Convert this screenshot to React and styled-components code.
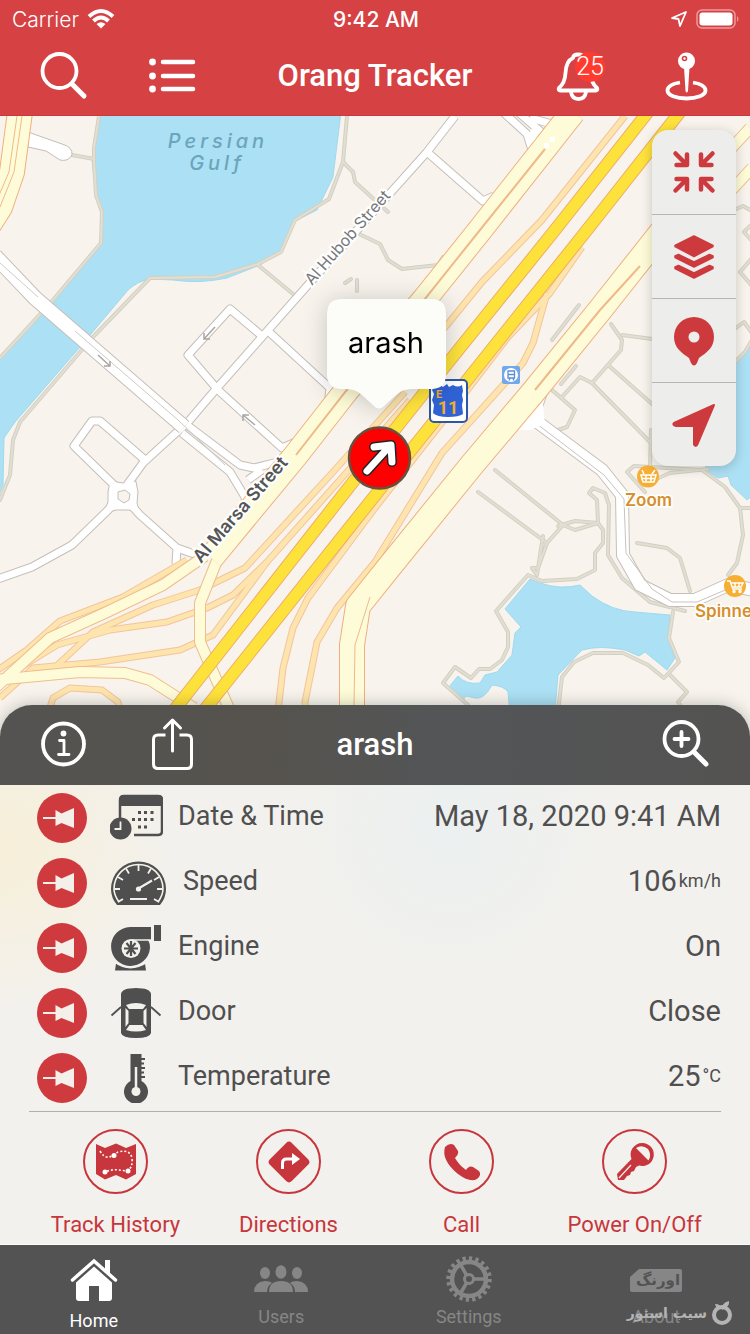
import React, { useState } from "react";
import styled, { createGlobalStyle } from "styled-components";

const paths = [
  "M99 116 L94 148 L94 162 L96 195 L102 212 L101 243 L53 300 L0 358",
  "M347 116 L343 162 L329 199 L295 220 L281 252 L258 264 L215 277 L150 278 L92 338 L20 422 L13 440 L10 475 L0 500",
  "M72 155 L94 159",
  "M343 162 L353 172 L355 182 L388 212",
  "M357 233 L380 244 L388 260 L402 269 L438 265 L443 257",
  "M258 265 L293 294",
  "M345 283 L351 279",
  "M357 280 L357 291",
  "M552 340 L579 305",
  "M561 384 L576 366",
  "M611 324 L622 340 L621 350 L592 383 L580 377 L562 397",
  "M622 335 L660 340",
  "M608 365 L660 411",
  "M592 383 L650 442",
  "M552 390 L575 410 L567 427 L558 430",
  "M651 430 L650 468",
  "M495 470 L563 525 L547 543 L478 492",
  "M543 536 L537 575 L532 568 L538 568 L547 543",
  "M558 526 L575 521 L598 523 L575 530 L563 525",
  "M598 523 L597 500 L589 493 L593 488 L605 493 L609 505 L608 555 L622 578 L650 602 L685 611",
  "M598 523 L603 530 L603 543 L595 553 L595 570 L577 579 L542 581 L528 575 L496 611 L508 632 L508 647 L502 660 L490 669 L479 669 L471 678 L455 667 L443 683 L468 705",
  "M637 543 L667 548 L680 558 L690 591",
  "M645 492 L627 472 L634 466 L702 470 L725 487 L740 508 L743 535 L737 563 L728 575",
  "M740 508 L752 508",
  "M645 484 L670 473 L708 469",
  "M673 612 L669 638 L679 662 L664 678 L648 665 L623 653 L593 653 L574 662 L562 677 L557 720",
  "M670 675 L687 692 L678 702 L690 720",
  "M733 364 L745 352 L752 340",
  "M736 328 L744 322 L752 333",
  "M752 258 L740 272 L752 286",
  "M734 210 L743 206 L752 211",
  "M752 224 L744 232 L752 241",
];

const streets = [
  "M455 116 L427 152 L307 286 L217 388 L188 422 L143 463 L127 485",
  "M427 152 L483 201 L494 196",
  "M503 112 L527 134 L532 150",
  "M518 112 L548 138",
  "M530 118 L552 124",
  "M262 336 L230 309 L188 355 L218 390 L282 448 L296 442",
  "M268 331 L330 388 L328 405",
  "M145 460 L100 421 L92 421 L74 446 L114 485",
  "M110 508 L103 515 L72 545 L32 567 L-5 580",
  "M132 506 L140 515 L177 548 L176 564",
  "M177 548 L200 556",
  "M187 425 L240 465 L254 468 L278 462",
  "M182 433 L230 472 L245 497 L247 525",
  "M248 480 L262 470",
];

const ramps = [
  "M625 116 L542 220 L482 282 L447 325 L380 398",
  "M582 247 L550 293 L508 337 L465 393 L375 508 L308 598 L293 628 L283 668 L277 720",
  "M547 293 L533 343 L523 363 L442 453 L375 562 L337 608 L317 642 L305 702 L305 720",
  "M405 392 L333 472 L245 568 L200 590 L153 605 L93 632 L50 672",
  "M410 400 L347 472 L267 562 L233 595 L207 608 L167 622 L110 630 L57 645 L0 680",
  "M267 562 L213 635 L180 650 L100 662 L33 668 L0 698",
  "M187 560 L123 597 L60 621 L27 650 L-5 672",
  "M46 720 L53 698 L70 688 L102 690 L118 702 L122 720",
];

const highways = [
  "M218 558 L200 603 L200 642 L213 672 L234 720",
  "M205 556 L163 585 L107 612 L50 638 L-5 688",
  "M-5 680 L80 672 L125 673 L150 680 L194 708",
  "M750 128 L728 152 L728 180",
  "M752 168 L728 194",
];

const wideHighways = [
  "M20 112 L12 172 L0 207 L-12 226",
  "M573 112 L480 230 L424 300 L346 391 L296 455 L211 558",
  "M668 224 L600 310 L535 390 L471 466 L390 566 L358 606 L352 645 L352 720",
];

const motorways = [
  "M648 112 L555 230 L447 364 L353 482 L168 718",
  "M680 112 L587 230 L373 498 L198 718",
];

const roundabout =
  "M111 482 L123 484 L135 482 L137 492 L136 503 L138 511 L129 509 L116 509 L105 512 L109 502 L109 492 Z";

const Road = ({ lines, casing, fill, width }) => (
  <g fill="none" strokeLinejoin="round">
    {lines.map((d) => (
      <path key={d} d={d} stroke={casing} strokeWidth={width + 2} />
    ))}
    {lines.map((d) => (
      <path key={d} d={d} stroke={fill} strokeWidth={width} />
    ))}
  </g>
);

const MapDrawing = () => (
  <Canvas viewBox="0 116 750 619" preserveAspectRatio="xMidYMin slice">
    <rect y="116" width="750" height="619" fill="#f8f4ed" />
    <g fill="#ace0f4" stroke="#a0d9ef" strokeWidth="1">
      <path d="M100 112 L94 140 L92 160 L96 197 L102 213 L101 243 L53 300 L-2 358 V497 L3 485 L4 438 L15 422 L80 347 L128 290 Q138 281 150 279 L173 280 Q200 284 227 278 L260 265 L281 251 L295 221 L317 210 L333 177 L341 112 Z" />
      <path d="M530 579 L540 583 Q560 590 580 585 L592 596 Q612 611 635 612 L670 615 L668 638 L675 658 L667 670 L645 652 L639 656 L625 650 Q600 645 582 650 L558 675 L553 735 H512 L508 692 Q504 686 492 685 Q484 700 475 698 L466 696 L463 700 L449 687 L458 676 Q466 685 480 683 L485 675 L497 672 L512 655 L515 633 L521 627 L505 609 Z" />
      <path d="M752 345 L737 360 L700 390 L706 470 L718 478 L728 476 L731 485 L747 500 L752 496 Z" />
    </g>

    <g fill="none" strokeLinecap="round" strokeLinejoin="round">
      {paths.map((d) => (
        <path key={d} d={d} stroke="#d2d0c4" strokeWidth="4" />
      ))}
      {paths.map((d) => (
        <path key={d} d={d} stroke="#e2dfd2" strokeWidth="2" />
      ))}
    </g>

    <path
      d="M28 132 L62 144 Q73 147 72 155 Q68 162 60 160 L46 151 L28 147 Z"
      fill="#fff"
      stroke="#c4beb8"
    />
    <path d={roundabout} stroke="#c4beb8" strokeWidth="3" />
    <Road lines={streets} casing="#c5bfba" fill="#fff" width={7} />
    <path d={roundabout} fill="#fff" stroke="#fff" />
    <path d="M118 492 l7 -2 5 4 -1 6 -5 3 -6 -4z" fill="#f8f4ed" stroke="#c4beb8" />
    <Road
      lines={["M-5 256 L35 298 L95 350 L184 427"]}
      casing="#c5bfba"
      fill="#fff"
      width={14}
    />
    <path d="M0 263 L38 297 M75 331 L178 420 L225 465" fill="none" stroke="#cfcac6" />

    <Road
      lines={[
        "M541 392 L532 418 L602 470 L622 495 L623 555 L640 585 L670 600 L695 600 L728 585 L755 590",
      ]}
      casing="#c5bfba"
      fill="#fff"
      width={12}
    />
    <path
      d="M533 421 L604 475 L624 499 L626 553 L652 589 L672 602 L697 602 L730 588"
      fill="none"
      stroke="#c9c3be"
    />
    <path d="M525 413 L542 394 L545 424 L530 430 L515 430 Z" fill="#fff" />

    <Road lines={ramps} casing="#f4c39c" fill="#fde5ad" width={5} />
    <Road lines={highways} casing="#f0bd8c" fill="#fefcd8" width={10} />
    <Road lines={wideHighways} casing="#efb07c" fill="#fefcd8" width={24} />
    <g fill="none" stroke="#efb98a">
      <path d="M22 116 L14 172 L0 207 M17 116 L9 172 L-3 200" />
      <path d="M545 149 L480 230 L424 300 L346 391 L296 455" strokeWidth="2" />
      <path d="M640 266 L600 310 L535 390" strokeWidth="2" />
      <path d="M370 597 L355 645 L354 705" />
    </g>
    <g fill="#fff">
      <path d="M526 140 l6 -12 8 4 -7 10z M544 143 h5 v5 h-5z M550 137 h5 v5 h-5z" />
    </g>
    <Road lines={motorways} casing="#efab68" fill="#fee23c" width={11} />

    <g fill="none" stroke="#a9a6a4" strokeWidth="1.5">
      <path d="M98 355 L110 366 M104 366 h6 v-5" />
      <path d="M215 327 L204 339 M204 333 v6 h6" />
      <path d="M255 425 L243 415 M243 421 v-6 h6" />
    </g>

    <WaterLabel x="218" y="148">Persian</WaterLabel>
    <WaterLabel x="217" y="170">Gulf</WaterLabel>
    <StreetLabel transform="translate(312 286) rotate(-48.5)">Al Hubob Street</StreetLabel>
    <StreetLabel $strong transform="translate(201 564) rotate(-49)">
      Al Marsa Street
    </StreetLabel>

    <rect x="502" y="366" width="18" height="18" rx="2" fill="#72a7ea" />
    <circle cx="511" cy="375" r="7" fill="#fff" />
    <path
      d="M508 371h6.500v7h-6.500z M508.500 374.500h5.500 M509 380.500l1-2 M514 380.500l-1-2"
      fill="none"
      stroke="#5a8fd8"
      strokeWidth="1.3"
    />

    <rect x="430" y="380" width="37" height="42" rx="4" fill="#fff" stroke="#2c56a8" strokeWidth="2" />
    <path
      d="M435 386 q3 -3 8 1 l4 -3 2 3 4 -2 q5 3 9 0 l1 6 -1 4 1 5 -1 5 1 9 q-4 3 -15 3 -11 0 -15 -4 l1 -8 -2 -5 2 -6 -2 -4z"
      fill="#2f63d6"
    />
    <ShieldText x="439" y="398" $size={11}>E</ShieldText>
    <ShieldText x="448" y="414" $size={18}>11</ShieldText>

    <circle cx="648" cy="476.500" r="11" fill="#f6ae33" />
    <g fill="none" stroke="#fff" strokeWidth="1.500">
      <path d="M641 475 h15 l-2 7 h-11z M641 478.500h13 M646 475v7 M651 475v7 M644 474l-2-4 M652 474l3-4" />
    </g>
    <PlaceLabel x="625" y="506">Zoom</PlaceLabel>
    <circle cx="735" cy="586" r="11" fill="#f6ae33" />
    <g fill="none" stroke="#fff" strokeWidth="1.500">
      <path d="M727 581h3l3 8h9 M731 583h12l-2 4h-9 M735 583v4 M739 583v4" />
      <circle cx="734" cy="591.500" r="1" />
      <circle cx="740" cy="591.500" r="1" />
    </g>
    <PlaceLabel x="695" y="617">Spinneys</PlaceLabel>

    <Callout>
      <path
        d="M342 299 H431 Q446 299 446 314 V374 Q446 389 431 389 H412 Q402 389 396 395 L384 406 Q379 411 374 406 L362 395 Q356 389 346 389 H342 Q327 389 327 374 V314 Q327 299 342 299 Z"
        fill="#fcfcf9"
      />
      <text x="386" y="353">arash</text>
    </Callout>

    <circle cx="379.500" cy="458" r="30.500" fill="#f00" stroke="#66513f" strokeWidth="2.500" />
    <g fill="none" strokeLinecap="round" strokeLinejoin="round">
      <path d="M367 471 L388 448 M374 447 L391 445 L392 462" stroke="#222" strokeWidth="10" />
      <path d="M367 471 L388 448 M374 447 L391 445 L392 462" stroke="#fff" strokeWidth="7" />
    </g>
  </Canvas>
);

const Glyph = ({ w = 48, h = 48, children }) => (
  <svg width={w} height={h} viewBox={`0 0 ${w} ${h}`} fill="none" aria-hidden="true">
    {children}
  </svg>
);

const line = { stroke: "currentColor", strokeLinecap: "round", strokeLinejoin: "round" };

const SearchIcon = ({ plus }) => (
  <Glyph>
    <circle cx="19.500" cy="19" r="17" {...line} strokeWidth="3.800" />
    <path d="M32 32 L44 44" {...line} strokeWidth="5" />
    {plus && <path d="M19.500 12 V26 M12.500 19 H26.500" {...line} strokeWidth="3.800" />}
  </Glyph>
);

const ListIcon = () => (
  <Glyph>
    {[10, 24, 37].map((y) => (
      <g key={y}>
        <circle cx="4.500" cy={y} r="3.400" fill="currentColor" />
        <path d={`M15 ${y} H45`} {...line} strokeWidth="4.500" />
      </g>
    ))}
  </Glyph>
);

const BellIcon = () => (
  <Glyph h={50}>
    <path
      d="M19 7 Q19 3.500 24 3.500 Q29 3.500 29 7 Q37 11 37 22 Q37 32 43 37 Q44 39.500 42 39.500 H6 Q4 39.500 5 37 Q11 32 11.500 22 Q12 10 19 7 Z"
      {...line}
      strokeWidth="3.800"
    />
    <path d="M17 41 Q18 48 24.500 48 Q31 48 32 41" {...line} strokeWidth="3.800" />
  </Glyph>
);

const PlaceIcon = () => (
  <Glyph h={50}>
    <path
      d="M18 31.500 C9 33 5.500 36 5.500 39.500 C5.500 44 14 47.500 24.500 47.500 C35 47.500 43.500 44 43.500 39.500 C43.500 36 40 33 31 31.500"
      stroke="currentColor"
      strokeWidth="3.800"
    />
    <path d="M22 16 H27.500 L26 40 Q24.700 43 23.500 40 Z" fill="currentColor" />
    <circle cx="24.500" cy="10" r="8.500" fill="currentColor" />
    <circle cx="22.500" cy="7.500" r="2" stroke="#d64244" strokeWidth="1.600" />
  </Glyph>
);

const InfoIcon = () => (
  <Glyph>
    <circle cx="23.500" cy="24" r="20.500" {...line} strokeWidth="3.800" />
    <circle cx="23.500" cy="13.500" r="2.900" fill="currentColor" />
    <path d="M19.500 20.500 H24 V34.500 M18.500 34.500 H29" {...line} strokeWidth="2.800" />
  </Glyph>
);

const ShareIcon = () => (
  <Glyph h={54}>
    <path
      d="M17.500 18 H10 Q5.500 18 5.500 22.500 V47 Q5.500 51.500 10 51.500 H39 Q43.500 51.500 43.500 47 V22.500 Q43.500 18 39 18 H31.500"
      stroke="currentColor"
      strokeWidth="3"
    />
    <path d="M24.500 34 V4 M16.500 11 L24.500 3 L32.500 11" {...line} strokeWidth="3" />
  </Glyph>
);

const ShrinkIcon = () => (
  <Glyph>
    {[0, 90, 180, 270].map((a) => (
      <g key={a} transform={`rotate(${a} 24 24)`}>
        <path d="M5.500 5.500 L16 16 M17 6.500 V17 H6.500" {...line} strokeWidth="4.500" />
      </g>
    ))}
  </Glyph>
);

const LayersIcon = () => (
  <Glyph>
    <g fill="currentColor" stroke="currentColor" strokeWidth="1.500" strokeLinejoin="round">
      <path d="M24 3 L43 12.500 V13.500 L24 23.500 L5 13.500 V12.500 Z" />
      <path d="M5 23 L8.500 21.500 L24 29 L39.500 21.500 L43 23 V24.500 L24 34 L5 24.500 Z" />
      <path d="M5 34 L8.500 32.500 L24 40 L39.500 32.500 L43 34 V35.500 L24 45 L5 35.500 Z" />
    </g>
  </Glyph>
);

const MarkerIcon = () => (
  <Glyph h={50}>
    <path
      fillRule="evenodd"
      d="M24 1 A20 20 0 0 1 44 21 C44 32 36 37 29 42 L27 47 Q24 52 21 47 L19 42 C12 37 4 32 4 21 A20 20 0 0 1 24 1 Z M24 15.500 A5.500 5.500 0 1 0 24 26.500 A5.500 5.500 0 1 0 24 15.500 Z"
      fill="currentColor"
    />
  </Glyph>
);

const NavigateIcon = () => (
  <Glyph>
    <path
      d="M44 4 L27 44 Q25.500 46 24 43.500 V25 H6 Q2 24 4 22 Z"
      fill="currentColor"
      stroke="currentColor"
      strokeWidth="2"
      strokeLinejoin="round"
    />
  </Glyph>
);

const TackIcon = () => (
  <Glyph w={50} h={50}>
    <path d="M6 25 H19" stroke="currentColor" strokeWidth="2" />
    <path
      d="M18.500 17 L24.500 20.500 L37 15 V35 L24.500 30 L18.500 33 Z"
      fill="currentColor"
    />
  </Glyph>
);

const DateIcon = () => (
  <Glyph w={53} h={48}>
    <path d="M10 24 V6 Q10 2 14 2 H48 Q52 2 52 6 V37 Q52 41 48 41 H24" stroke="currentColor" strokeWidth="2.500" />
    <path d="M9 12 V6 Q9 1 14 1 H48 Q53 1 53 6 V12 Z" fill="currentColor" />
    <path
      d="M28 17h3v3h-3z M34 17h3v3h-3z M40.500 17h3v3h-3z M22 24h3v3h-3z M28 24h3v3h-3z M34 24h3v3h-3z M40.500 24h3v3h-3z M28 31.500h3v3h-3z M34 31.500h3v3h-3z"
      fill="currentColor"
    />
    <circle cx="10.500" cy="34.500" r="11" fill="currentColor" />
    <path d="M10.500 27.500 V35 H4.500" stroke="#f3f1eb" strokeWidth="1.800" />
  </Glyph>
);

const SpeedIcon = () => (
  <Glyph w={58} h={48}>
    <path d="M7 46 Q1 39 1 30 A27.500 27.500 0 0 1 56 30 Q56 39 50 46 Z" fill="currentColor" />
    <path d="M9 43 Q4 36 4 30 A24.500 24.500 0 0 1 53 30 Q53 36 48 43" stroke="#f3f1eb" strokeWidth="1.600" />
    <path
      d="M4.500 30 H10 M8 18 L13 21 M16 9.500 L19 14.500 M28.500 6 V12 M41 9.500 L38 14.500 M49 18 L44 21 M52.500 30 H47 M8 43 L13 40 M49 43 L44 40"
      stroke="#f3f1eb"
      strokeWidth="1.800"
    />
    <path d="M28.500 29.500 L42 21.500 M20 40 H37" stroke="#f3f1eb" strokeWidth="2.200" />
    <circle cx="28.500" cy="30" r="2.600" fill="#f3f1eb" />
  </Glyph>
);

const EngineIcon = () => (
  <Glyph w={53} h={48}>
    <path
      d="M41 3 V16 H38 Q40 19 40 24 A19.500 19.500 0 1 1 20 3 Z M44 1 H51 V17 H44 Z M5 46.500 L6 39.500 Q20 48 35 39.500 L36 46.500 Z"
      fill="currentColor"
    />
    <path d="M5 38 Q20 49 37 38" stroke="#f3f1eb" strokeWidth="2" />
    <circle cx="21" cy="24.500" r="9.500" fill="#f3f1eb" />
    <path d="M21 17 V32 M14 24.500 H28 M16.500 19 L25.500 30 M25.500 19 L16.500 30" stroke="currentColor" strokeWidth="2.200" />
    <path d="M22 16 H41" stroke="#f3f1eb" strokeWidth="1.500" />
  </Glyph>
);

const DoorIcon = () => (
  <Glyph w={53} h={52}>
    <path
      d="M11 7 Q12 1 26 1 Q40 1 41 7 V46 Q40 51 26 51 Q12 51 11 46 Z"
      fill="currentColor"
    />
    <path d="M11 20 L1.500 28.500 M41 20 L50.500 28.500" stroke="currentColor" strokeWidth="1.800" />
    <path
      d="M16 18 Q26 14 36 18 L33 22 H19 Z M15.500 21 L18.500 24 V36 L15.500 40 Z M36.500 21 L33.500 24 V36 L36.500 40 Z M16 43 L19.500 38 H32.500 L36 43 Q26 46 16 43 Z"
      fill="#f3f1eb"
    />
  </Glyph>
);

const TemperatureIcon = () => (
  <Glyph w={53} h={50}>
    <path d="M20.500 1 H31.500 V28 A12 12 0 1 1 20.500 28 Z" fill="currentColor" />
    <path d="M31 6 H35 M31 10.500 H34 M31 15 H35 M31 19.500 H34 M31 24 H35" stroke="currentColor" strokeWidth="1.800" />
    <path d="M26 14 V38" stroke="#f3f1eb" strokeWidth="2.500" />
    <circle cx="26" cy="38.500" r="4.500" fill="#f3f1eb" />
  </Glyph>
);

const HistoryIcon = () => (
  <Glyph w={44} h={44}>
    <path d="M2 4 L11 8 L22 3.500 L32 8 L42 4 V34 L32 39.500 L22 35 L11 39.500 L2 34 Z" fill="currentColor" />
    <path
      d="M6 11 Q10 18 15 17 Q19 16 24 12 Q36 9 38 18 Q39 28 33 31 L25 30 Q18 29 11 32"
      stroke="#fff"
      strokeWidth="1.600"
      strokeDasharray="2 2"
    />
    <g fill="#fff">
      <circle cx="20" cy="15.500" r="2.500" />
      <circle cx="34" cy="31" r="2.500" />
      <circle cx="11" cy="32" r="2.500" />
    </g>
  </Glyph>
);

const DirectionsIcon = () => (
  <Glyph w={44} h={44}>
    <rect x="6.500" y="6.500" width="31" height="31" rx="4" transform="rotate(45 22 22)" fill="currentColor" />
    <path d="M15.500 29 V23 Q15.500 19 19.500 19 H27" stroke="#fff" strokeWidth="3" />
    <path d="M25 13 L33 19 L25 25 Z" fill="#fff" />
  </Glyph>
);

const CallIcon = () => (
  <Glyph w={44} h={44}>
    <path
      d="M5 7 Q10 2 14 5 L18 11 Q19 14 15 18 Q19 25 26 30 Q29 25 33 27 L39 31 Q42 35 37 39 Q30 43 18 34 Q1 20 5 7 Z"
      fill="currentColor"
    />
  </Glyph>
);

const KeyIcon = () => (
  <Glyph w={44} h={44}>
    <path
      fillRule="evenodd"
      d="M29 3 A11.500 11.500 0 1 1 26 25.500 L23 27 L21 31 L18 32 L17 35 L14 36 L11 40 H5 L4 34 L18.500 19 A11.500 11.500 0 0 1 29 3 Z M23 8 L35.500 20.500 Q39 15 35 9 Q29 4 23 8 Z"
      fill="currentColor"
    />
    <path d="M6 38 L18 25" stroke="#f3f1eb" strokeWidth="1.200" />
  </Glyph>
);

const HomeIcon = () => (
  <Glyph h={44}>
    <path d="M2.500 22 L24 3 L45.500 22" {...line} strokeWidth="3.500" strokeLinejoin="miter" />
    <path d="M35 2 H40 V18 L35 13 Z" fill="currentColor" />
    <path d="M24 8.500 L42 24.500 V40 Q42 43 39 43 H29 V28 H19 V43 H9 Q6 43 6 40 V24.500 Z" fill="currentColor" />
  </Glyph>
);

const UsersIcon = () => (
  <Glyph w={54} h={40}>
    <g fill="currentColor">
      <ellipse cx="11" cy="14" rx="5" ry="6" />
      <ellipse cx="43" cy="14" rx="5" ry="6" />
      <ellipse cx="27" cy="13" rx="5.500" ry="6.700" />
      <path d="M0 33 Q0 23 11 22 Q16 22 18 24 Q13 27 13 33 Z M54 33 Q54 23 43 22 Q38 22 36 24 Q41 27 41 33 Z" />
      <path d="M15 33 Q15 22 27 22 Q39 22 39 33 Z" />
    </g>
  </Glyph>
);

const SettingsIcon = () => (
  <Glyph w={48} h={46}>
    <circle cx="24" cy="23" r="17" stroke="currentColor" strokeWidth="4.500" />
    <circle cx="24" cy="23" r="20.500" stroke="currentColor" strokeWidth="4.500" pathLength="40" strokeDasharray="1 1" />
    <circle cx="24" cy="23" r="4.500" stroke="currentColor" strokeWidth="3" />
    <path d="M29 23 H40 M21.500 19 L16 9.500 M21.500 27 L16 36.500" stroke="currentColor" strokeWidth="3.500" />
  </Glyph>
);

const BrandIcon = () => (
  <Glyph w={54} h={40}>
    <path d="M10 10 H51 Q53 10 53 12 V31 Q53 33 51 33 H3 Q1 33 1 31 V18 Z" fill="currentColor" />
    <BrandText x="29" y="26">اورنگ</BrandText>
  </Glyph>
);

const rows = [
  { label: "Date & Time", value: "May 18, 2020 9:41 AM", icon: <DateIcon /> },
  { label: "Speed", value: "106", unit: "km/h", icon: <SpeedIcon /> },
  { label: "Engine", value: "On", icon: <EngineIcon /> },
  { label: "Door", value: "Close", icon: <DoorIcon /> },
  { label: "Temperature", value: "25", unit: "°C", icon: <TemperatureIcon /> },
];

const actions = [
  { label: "Track History", icon: <HistoryIcon /> },
  { label: "Directions", icon: <DirectionsIcon /> },
  { label: "Call", icon: <CallIcon /> },
  { label: "Power On/Off", icon: <KeyIcon /> },
];

const tabs = [
  { label: "Home", icon: <HomeIcon /> },
  { label: "Users", icon: <UsersIcon /> },
  { label: "Settings", icon: <SettingsIcon /> },
  { label: "About", icon: <BrandIcon /> },
];

const App = () => {
  const [tab, setTab] = useState("Home");

  return (
    <Page>
      <GlobalStyle />
      <Header>
        <StatusBar>
          <StatusSide>
            Carrier
            <Glyph w={28} h={22}>
              <g stroke="currentColor" strokeWidth="4">
                <path d="M2 8.500 Q14 -2.500 26 8.500" />
                <path d="M6.500 13 Q14 6 21.500 13" />
              </g>
              <path d="M9.500 16 Q14 12.500 18.500 16 L14 20.500 Z" fill="currentColor" />
            </Glyph>
          </StatusSide>
          <Clock>9:42 AM</Clock>
          <StatusSide $end>
            <Glyph w={18} h={18}>
              <path d="M16 2 L10 16 L8.500 9 L2 8 Z" {...line} strokeWidth="1.800" />
            </Glyph>
            <Glyph w={44} h={20}>
              <rect x="1" y="1" width="38" height="18" rx="5" stroke="#e99a9b" strokeWidth="1.500" />
              <rect x="3.500" y="3.500" width="33" height="13" rx="3" fill="currentColor" />
              <path d="M41 7 Q44 10 41 13 Z" fill="#e99a9b" />
            </Glyph>
          </StatusSide>
        </StatusBar>
        <Bar>
          <BarGroup>
            <IconButton aria-label="Search">
              <SearchIcon />
            </IconButton>
            <IconButton aria-label="Vehicle list">
              <ListIcon />
            </IconButton>
          </BarGroup>
          <Title>Orang Tracker</Title>
          <BarGroup $end>
            <IconButton aria-label="Notifications">
              <BellIcon />
              <Badge>25</Badge>
            </IconButton>
            <IconButton aria-label="Places">
              <PlaceIcon />
            </IconButton>
          </BarGroup>
        </Bar>
      </Header>

      <Map>
        <MapDrawing />
        <Controls>
          <ControlButton aria-label="Fit all">
            <ShrinkIcon />
          </ControlButton>
          <ControlButton aria-label="Layers">
            <LayersIcon />
          </ControlButton>
          <ControlButton aria-label="Marker">
            <MarkerIcon />
          </ControlButton>
          <ControlButton aria-label="My location">
            <NavigateIcon />
          </ControlButton>
        </Controls>
      </Map>

      <Sheet>
        <SheetHeader>
          <BarGroup>
            <IconButton aria-label="Info">
              <InfoIcon />
            </IconButton>
            <IconButton aria-label="Share">
              <ShareIcon />
            </IconButton>
          </BarGroup>
          <Title as="h2">arash</Title>
          <BarGroup $end>
            <IconButton aria-label="Zoom in">
              <SearchIcon plus />
            </IconButton>
          </BarGroup>
        </SheetHeader>
        <Rows>
          {rows.map((row) => (
            <Row key={row.label}>
              <PinButton aria-label={`Pin ${row.label}`}>
                <TackIcon />
              </PinButton>
              {row.icon}
              <RowLabel>{row.label}</RowLabel>
              <RowValue>
                {row.value}
                {row.unit && <Unit>{row.unit}</Unit>}
              </RowValue>
            </Row>
          ))}
        </Rows>
        <Actions>
          {actions.map((action) => (
            <Action key={action.label}>
              <ActionCircle>{action.icon}</ActionCircle>
              {action.label}
            </Action>
          ))}
        </Actions>
      </Sheet>

      <TabBar>
        {tabs.map(({ label, icon }) => (
          <Tab key={label} $active={tab === label} onClick={() => setTab(label)}>
            <TabIcon>{icon}</TabIcon>
            {label}
          </Tab>
        ))}
        <Watermark>
          <span>سیب استور</span>
          <Glyph w={22} h={26}>
            <circle cx="11" cy="15" r="8" stroke="currentColor" strokeWidth="4" />
            <path d="M11 10 Q10 3 18 1 Q19 7 11 10 Z M4 4 Q10 4 10 9 Q5 9 4 4 Z" fill="currentColor" />
          </Glyph>
        </Watermark>
      </TabBar>
    </Page>
  );
};

export default App;

const GlobalStyle = createGlobalStyle`
  * {
    box-sizing: border-box;
  }

  body {
    margin: 0;
    font-family: Roboto, "Liberation Sans", sans-serif;
  }

  button {
    padding: 0;
    border: none;
    background: none;
    color: inherit;
    font: inherit;
    cursor: pointer;
  }

  svg {
    display: block;
    flex-shrink: 0;
  }
`;

const Page = styled.div`
  display: flex;
  flex-direction: column;
  min-height: 100vh;
  overflow: hidden;
`;

const Header = styled.header`
  background: #d64244;
  color: #fff;
  border-bottom: 1px solid #c93a3d;
`;

const StatusBar = styled.div`
  display: grid;
  grid-template-columns: 1fr auto 1fr;
  align-items: center;
  height: 38px;
  padding: 0 10px 0 12px;
  font-family: Inter, "Liberation Sans", sans-serif;
  font-size: 21px;
  font-weight: 300;
`;

const StatusSide = styled.div`
  display: flex;
  align-items: center;
  gap: 8px;
  justify-content: ${(props) => (props.$end ? "flex-end" : "flex-start")};
`;

const Clock = styled.div`
  font-weight: 500;
`;

const Bar = styled.div`
  display: grid;
  grid-template-columns: 1fr auto 1fr;
  align-items: center;
  height: 77px;
  padding: 0 40px 2px;
`;

const BarGroup = styled.div`
  display: flex;
  align-items: center;
  gap: 60px;
  justify-content: ${(props) => (props.$end ? "flex-end" : "flex-start")};
`;

const IconButton = styled.button`
  position: relative;
`;

const Title = styled.h1`
  margin: 0;
  font-size: 31px;
  font-weight: 500;
`;

const Badge = styled.span`
  position: absolute;
  top: 1px;
  right: -3px;
  width: 30px;
  border-radius: 15px;
  background: #ff3b30;
  font-size: 25px;
  font-weight: 300;
  line-height: 30px;
`;

const Map = styled.main`
  position: relative;
  flex: 1;
  min-height: 560px;
  margin-bottom: -30px;
  overflow: hidden;
`;

const Canvas = styled.svg`
  position: absolute;
  inset: 0;
  width: 100%;
  height: 100%;
`;

const WaterLabel = styled.text`
  fill: #6ba5bc;
  font-family: Inter, sans-serif;
  font-size: 20px;
  font-style: italic;
  font-weight: 500;
  letter-spacing: 4px;
  text-anchor: middle;
`;

const StreetLabel = styled.text`
  fill: ${(props) => (props.$strong ? "#555" : "#77787b")};
  font-family: Inter, sans-serif;
  font-size: ${(props) => (props.$strong ? "18px" : "16px")};
  font-weight: ${(props) => (props.$strong ? 600 : 400)};
  stroke: #fff;
  stroke-width: 4px;
  paint-order: stroke;
`;

const ShieldText = styled.text`
  fill: #f2ae30;
  font-family: Roboto, sans-serif;
  font-size: ${(props) => props.$size}px;
  font-weight: 700;
  text-anchor: middle;
`;

const PlaceLabel = styled.text`
  fill: #d68f2c;
  font-family: Inter, sans-serif;
  font-size: 17px;
  font-weight: 600;
  stroke: #fff;
  stroke-width: 3px;
  paint-order: stroke;
`;

const Callout = styled.g`
  font-family: Inter, sans-serif;
  font-size: 29px;
  text-anchor: middle;
  filter: drop-shadow(0 2px 12px rgba(0, 0, 0, 0.2));
`;

const Controls = styled.div`
  position: absolute;
  top: 14px;
  right: 14px;
  width: 84px;
  border-radius: 16px;
  background: #ededeb;
  box-shadow: 0 2px 12px rgba(0, 0, 0, 0.2);
`;

const ControlButton = styled.button`
  display: flex;
  align-items: center;
  justify-content: center;
  width: 100%;
  height: 84px;
  color: #cd3a3e;

  & + & {
    border-top: 1px solid #b5b5b3;
  }
`;

const Sheet = styled.section`
  position: relative;
  border-radius: 32px 32px 0 0;
  background: radial-gradient(
      circle at 0 140px,
      #f7efd8,
      rgba(247, 239, 216, 0) 170px
    ),
    radial-gradient(
      circle at 60% 120px,
      #ebf0f0,
      rgba(235, 240, 240, 0) 180px
    ),
    #f3f1ed;
  box-shadow: 0 0 16px rgba(0, 0, 0, 0.25);
`;

const SheetHeader = styled(Bar)`
  height: 80px;
  border-radius: 32px 32px 0 0;
  background: linear-gradient(90deg, #545351, #56534e 35%, #535557 60%, #545352);
  color: #fff;
`;

const Rows = styled.ul`
  margin: 0 29px;
  padding: 0 0 1px;
  border-bottom: 1px solid #b3b0ab;
  list-style: none;
`;

const Row = styled.li`
  display: flex;
  align-items: center;
  gap: 15px;
  height: 65px;
  padding-left: 8px;
  color: #4f4f4f;
`;

const PinButton = styled.button`
  margin-right: 8px;
  border-radius: 50%;
  background: #cf3a3f;
  color: #f5efe9;
`;

const RowLabel = styled.span`
  flex: 1;
  padding-bottom: 4px;
  font-size: 27px;
`;

const RowValue = styled.span`
  display: flex;
  align-items: center;
  padding-bottom: 4px;
  font-size: 29px;
`;

const Unit = styled.small`
  margin-left: 2px;
  font-size: 18px;
`;

const Actions = styled.div`
  display: grid;
  grid-template-columns: repeat(4, 1fr);
  padding: 17px 29px 6px;
`;

const Action = styled.button`
  display: flex;
  flex-direction: column;
  align-items: center;
  gap: 18px;
  color: #c7363c;
  font-size: 22px;
  line-height: 26px;
  white-space: nowrap;
`;

const ActionCircle = styled.span`
  display: flex;
  align-items: center;
  justify-content: center;
  width: 65px;
  height: 65px;
  border: 2px solid #c7363c;
  border-radius: 50%;
`;

const TabBar = styled.nav`
  position: relative;
  display: grid;
  grid-template-columns: repeat(4, 1fr);
  height: 90px;
  border-top: 1px solid #fbfbfa;
  background: #535353;
`;

const Tab = styled.button`
  display: flex;
  flex-direction: column;
  align-items: center;
  justify-content: flex-end;
  gap: ${(props) => (props.$active ? "4px" : "1px")};
  padding-bottom: ${(props) => (props.$active ? "2px" : "6px")};
  color: ${(props) => (props.$active ? "#fff" : "#868686")};
  font-size: 18px;
  line-height: 22px;
`;

const TabIcon = styled.span`
  display: flex;
  align-items: center;
  height: 52px;
`;

const BrandText = styled.text`
  fill: #535353;
  font-family: "DejaVu Sans", sans-serif;
  font-size: 15px;
  font-weight: 700;
  text-anchor: middle;
`;

const Watermark = styled.div`
  position: absolute;
  right: 17px;
  bottom: 8px;
  display: flex;
  align-items: center;
  gap: 4px;
  color: #b4b4b4;
  font-family: "DejaVu Sans", sans-serif;
  font-size: 14px;
  font-weight: 700;
  pointer-events: none;
`;
